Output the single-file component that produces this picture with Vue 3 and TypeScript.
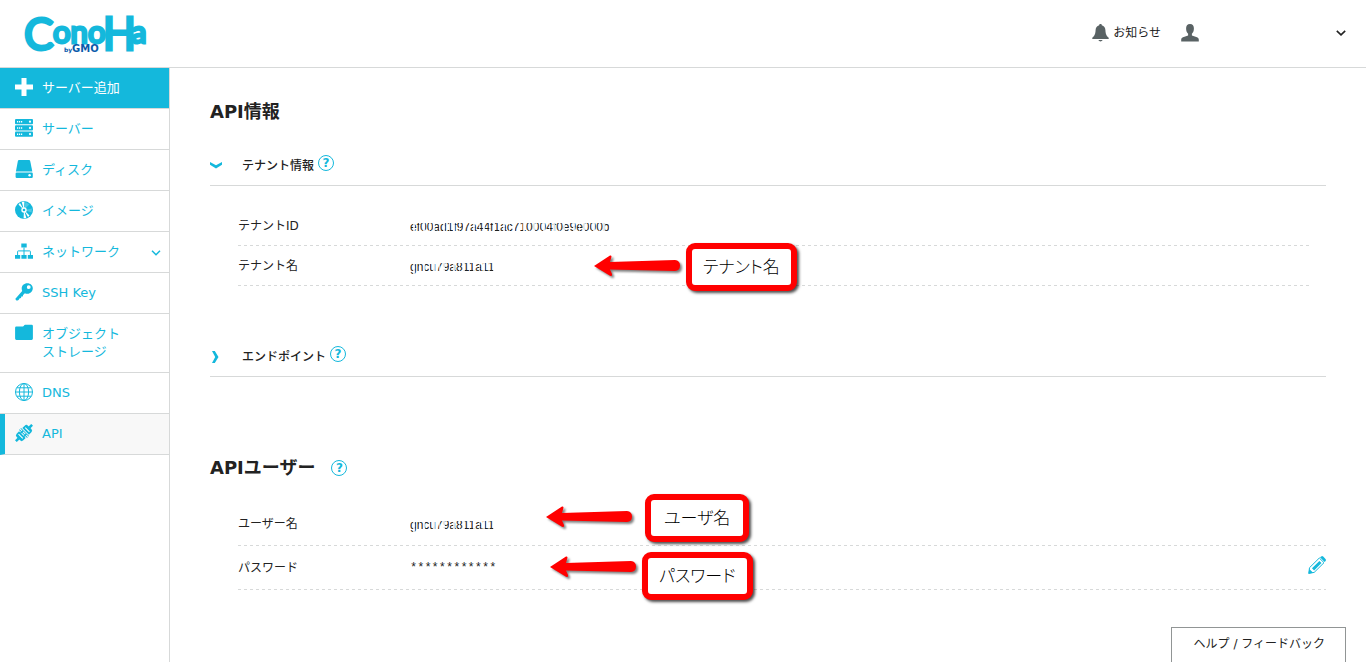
<script setup lang="ts">
import { ref } from 'vue'

interface NavItem {
  icon: string
  lines: string[]
  primary?: boolean
  active?: boolean
  expandable?: boolean
}

const navItems: NavItem[] = [
  { icon: 'plus', lines: ['サーバー追加'], primary: true },
  { icon: 'server', lines: ['サーバー'] },
  { icon: 'disk', lines: ['ディスク'] },
  { icon: 'image', lines: ['イメージ'] },
  { icon: 'network', lines: ['ネットワーク'], expandable: true },
  { icon: 'key', lines: ['SSH Key'] },
  { icon: 'folder', lines: ['オブジェクト', 'ストレージ'] },
  { icon: 'globe', lines: ['DNS'] },
  { icon: 'plug', lines: ['API'], active: true },
]

const callouts = [
  { name: 'tenant', text: 'テナント名' },
  { name: 'user', text: 'ユーザ名' },
  { name: 'password', text: 'パスワード' },
]

const tenantOpen = ref(true)
const endpointOpen = ref(false)
</script>

<template>
  <div class="page">
    <header class="header">
      <a href="#" class="logo" aria-label="ConoHa by GMO">
        <svg width="126" height="42" viewBox="0 0 126 42">
          <text class="logo-word" x="0" y="38" font-size="44">C<tspan x="29" y="31" font-size="31">ono</tspan><tspan x="79" y="38" font-size="46" class="logo-h">H</tspan><tspan x="107" y="31" font-size="31">a</tspan></text>
          <text class="logo-gmo" x="40" y="40" font-size="6">by<tspan x="48" font-size="10">GMO</tspan></text>
        </svg>
      </a>
      <div class="tools">
        <a href="#" class="notice">
          <svg width="17" height="18" viewBox="0 0 17 18" fill="#596264">
            <path d="M8.500 0c-.9 0-1.300.5-1.300 1.200C4.900 1.800 3.800 3.600 3.600 6c-.2 4-.9 5.700-3.300 7.700V15h16.400v-1.300c-2.400-2-3.100-3.700-3.300-7.700-.2-2.400-1.300-4.200-3.600-4.800C9.800.5 9.400 0 8.500 0zM6.500 16c.3 1 1.100 1.400 2 1.400s1.700-.4 2-1.400z" />
          </svg>
          <span>お知らせ</span>
        </a>
        <button type="button" class="account" aria-label="アカウント">
          <svg width="18" height="18" viewBox="0 0 18 18" fill="#596264">
            <path d="M9 0C6.300 0 5 1.900 5.100 4.500c0 2.400.8 4.200 2 5.300v1.700L2 13.200C.7 13.700.2 14.500.2 15.700V17.500h17.600v-1.800c0-1.200-.5-2-1.800-2.500l-5.100-1.700V9.800c1.200-1.100 2-2.900 2-5.300C13 1.900 11.700 0 9 0z" />
          </svg>
          <svg width="10" height="6" viewBox="0 0 10 6" fill="none" stroke="#222" stroke-width="1.600">
            <path d="M.8.8 5 4.800 9.200.8" />
          </svg>
        </button>
      </div>
    </header>

    <div class="body">
      <nav class="sidebar">
        <a
          v-for="item in navItems"
          :key="item.icon"
          href="#"
          class="nav-item"
          :class="{ primary: item.primary, active: item.active }"
        >
          <svg class="nav-icon" width="18" height="18" viewBox="0 0 18 18" fill="currentColor">
            <path v-if="item.icon === 'plus'" d="M6.500 0h5v6.500H18v5h-6.500V18h-5v-6.500H0v-5h6.500z" />
            <template v-else-if="item.icon === 'server'">
              <rect y="0" width="18" height="5.300" rx="1" />
              <rect y="6.200" width="18" height="5.300" rx="1" />
              <rect y="12.400" width="18" height="5.300" rx="1" />
              <g fill="#fff">
                <path d="M2 2h1.200v1.600H2zM4 2h1.200v1.600H4zM6 2h1.200v1.600H6zM2 8.200h1.200v1.600H2zM4 8.200h1.200v1.600H4zM6 8.200h1.200v1.600H6zM2 14.400h1.200V16H2zM4 14.400h1.200V16H4zM6 14.400h1.200V16H6z" />
                <circle cx="15" cy="2.700" r="1.100" />
                <circle cx="15" cy="8.900" r="1.100" />
                <circle cx="15" cy="15.100" r="1.100" />
              </g>
            </template>
            <template v-else-if="item.icon === 'disk'">
              <path d="M4 0h10q1 0 1.200 1L17.300 11.600H.9L2.900 1Q3.100 0 4 0z" />
              <rect x=".6" y="12.600" width="17.200" height="5.400" rx="1.200" />
              <circle cx="14.600" cy="15.300" r="1.200" fill="#fff" />
            </template>
            <template v-else-if="item.icon === 'image'">
              <circle cx="9" cy="9" r="9" />
              <g fill="#fff">
                <path d="M3.500 3.500 5 2.100 9 9zM6.700 1 9.400.6 9 9zM14.500 14.500 13 15.900 9 9zM11.300 17 8.600 17.400 9 9z" />
                <path d="M10.500 1 14.400 3.300 9 9zM17 7.500l-.4 4L9 9z" opacity=".25" />
                <circle cx="9" cy="9" r="2.700" />
              </g>
              <circle cx="9" cy="9" r="1.300" />
            </template>
            <template v-else-if="item.icon === 'network'">
              <path d="M6.300 1.500h5.400v4H6.300zM0 13h5.200v3.800H0zM6.400 13h5.200v3.800H6.400zM12.800 13H18v3.800h-5.200z" />
              <path d="M9 5.500V13M2.600 13V9.500q0-.6.6-.6h11.600q.6 0 .6.600V13" fill="none" stroke="currentColor" />
            </template>
            <template v-else-if="item.icon === 'key'">
              <path fill-rule="evenodd" d="M12.300.2c3.200 0 5.500 2.200 5.500 5.100s-2.300 5.500-5.400 5.500c-1 0-1.800-.2-2.500-.6l-1.800 1.700-.3 1.500-1.500.2-.3 1.500-1.600.3-.8 1.600-1.800.8L.2 16 7.200 8C6.900 7.300 6.700 6.500 6.700 5.600 6.700 2.500 9 .2 12.300.2zM13.700 2.200a1.900 1.900 0 1 0 .1 3.800 1.900 1.900 0 0 0-.1-3.800z" />
            </template>
            <path v-else-if="item.icon === 'folder'" d="M1.300 2.600h6.500c.9 0 1.300-1.800 2.300-1.800h6.600q1.200 0 1.200 1.200v12.500q0 1.400-1.300 1.400H1.400Q.1 15.900.1 14.500V3.800q0-1.200 1.200-1.200z" />
            <g v-else-if="item.icon === 'globe'" fill="none" stroke="currentColor" stroke-width="1">
              <circle cx="9" cy="9" r="8.500" />
              <ellipse cx="9" cy="9" rx="4.600" ry="8.500" />
              <path d="M9 .5v17M.5 9h17M1.700 4.800h14.600M1.700 13.200h14.600" />
            </g>
            <template v-else>
              <g transform="rotate(-45 9 9)">
                <path d="M-2.500 7.700H1.500V10.300H-2.500zM16.500 7.700h4v2.600h-4z" />
                <path d="M1 6.600Q1 4.300 3.300 4.300H6.700V13.700H3.300Q1 13.700 1 11.400zM11.300 4.300h3.400q2.300 0 2.300 2.300v4.800q0 2.300-2.300 2.300h-3.400z" />
                <path d="M7.700 3.300h.9v11.400h-.9zM9.600 3.300h.9v11.400h-.9zM6 6h4v1.400H6zM6 10.600h4V12H6z" />
                <path d="M3.800 6h1v6h-1zM13.200 6h1v6h-1z" fill="#fff" />
              </g>
            </template>
          </svg>
          <span class="nav-label"><span v-for="line in item.lines" :key="line">{{ line }}</span></span>
          <svg v-if="item.expandable" class="nav-arrow" width="10" height="6" viewBox="0 0 10 6" fill="none" stroke="currentColor" stroke-width="1.500">
            <path d="M1 .8 5 4.800 9 .8" />
          </svg>
        </a>
      </nav>

      <main class="content">
        <h1>API情報</h1>

        <section>
          <div class="bar">
            <button type="button" class="toggle" :aria-expanded="tenantOpen" @click="tenantOpen = !tenantOpen">
              <svg width="12" height="12" viewBox="0 0 12 12" fill="#14b8dc" :class="{ closed: !tenantOpen }">
                <path d="M0 2 6 5.200 12 2V4.800L6 8.500 0 4.800z" />
              </svg>
              <span>テナント情報</span>
            </button>
            <button type="button" class="help" aria-label="テナント情報のヘルプ">?</button>
          </div>
          <dl v-if="tenantOpen" class="rows tenant-rows">
            <div>
              <dt>テナントID</dt>
              <dd><span class="masked">ef00ad1f97a44f1ac710004f0e9e000b</span></dd>
            </div>
            <div>
              <dt>テナント名</dt>
              <dd><span class="masked">gncu79a811a11</span></dd>
            </div>
          </dl>
        </section>

        <section class="endpoint">
          <div class="bar">
            <button type="button" class="toggle" :aria-expanded="endpointOpen" @click="endpointOpen = !endpointOpen">
              <svg width="12" height="12" viewBox="0 0 12 12" fill="#14b8dc" :class="{ closed: !endpointOpen }">
                <path d="M0 2 6 5.200 12 2V4.800L6 8.500 0 4.800z" />
              </svg>
              <span>エンドポイント</span>
            </button>
            <button type="button" class="help" aria-label="エンドポイントのヘルプ">?</button>
          </div>
        </section>

        <section class="api-user">
          <div class="title">
            <h2>APIユーザー</h2>
            <button type="button" class="help" aria-label="APIユーザーのヘルプ">?</button>
          </div>
          <dl class="rows user-rows">
            <div>
              <dt>ユーザー名</dt>
              <dd><span class="masked">gncu79a811a11</span></dd>
            </div>
            <div>
              <dt>パスワード</dt>
              <dd class="secret">************</dd>
              <dd class="action">
                <button type="button" class="edit" aria-label="パスワードを編集">
                  <svg width="18" height="18" viewBox="0 0 18 18">
                    <path d="M1.500 11.700 11.300 2l4.700 4.700-9.800 9.700-5.400 1z" fill="#fff" stroke="#14b8dc" />
                    <path d="M12 1.300 13.200.4q1-.7 2 .2l2.300 2.300q.8 1 .1 2L16.600 6zM.4 17.700l.9-4.700 3.800 3.800zM4 12.300l7.400-7.400 2.100 2.100L6.100 14.400z" fill="#14b8dc" />
                  </svg>
                </button>
              </dd>
            </div>
          </dl>
        </section>

        <div v-for="c in callouts" :key="c.name" class="callout" :class="'callout-' + c.name">
          <svg width="90" height="26" viewBox="0 0 90 26" fill="#f00">
            <path d="M1 12 17 1.500Q19 1 18.300 3.500L17 8 82 6Q87 6.500 87 11.500T82 17L17 15.500 19 20Q19.500 22.500 17 21.800z" />
          </svg>
          <span>{{ c.text }}</span>
        </div>
      </main>
    </div>

    <button type="button" class="feedback">ヘルプ / フィードバック</button>
  </div>
</template>

<style>
body {
  margin: 0;
  background: #fff;
}
</style>

<style scoped>
.page {
  display: flex;
  flex-direction: column;
  min-height: 100vh;
  color: #222;
  font-family: "DejaVu Sans", "Noto Sans CJK JP", sans-serif;
  font-size: 12px;
  font-weight: 400;
  line-height: 18px;
}

button {
  padding: 0;
  border: 0;
  background: none;
  color: inherit;
  font: inherit;
  cursor: pointer;
}

a {
  color: inherit;
  text-decoration: none;
}

svg {
  display: block;
  flex: none;
}

.header {
  display: flex;
  justify-content: space-between;
  align-items: center;
  box-sizing: border-box;
  height: 68px;
  padding: 0 20px 2px 24px;
  border-bottom: 1px solid #d7d9d9;
}

.logo svg {
  overflow: visible;
}

.logo-word {
  fill: #14b8dc;
  stroke: #14b8dc;
  stroke-width: 3px;
  font-family: Lato, sans-serif;
  font-weight: 400;
}

.logo-h {
  font-family: Roboto, sans-serif;
}

.logo-gmo {
  fill: #0a5aaa;
  font-family: "DejaVu Sans", sans-serif;
  font-weight: 700;
}

.tools,
.notice,
.account {
  display: flex;
  align-items: center;
}

.tools {
  gap: 20px;
}

.notice {
  gap: 4px;
}

.account {
  justify-content: space-between;
  width: 165px;
}

.body {
  display: flex;
  flex: 1;
}

.sidebar {
  flex: none;
  box-sizing: border-box;
  width: 170px;
  border-right: 1px solid #d7d9d9;
}

.nav-item {
  display: flex;
  align-items: flex-start;
  gap: 9px;
  padding: 10px 8px 11px 15px;
  border-bottom: 1px solid #d7d9d9;
  color: #14b8dc;
  font-size: 13px;
}

.nav-label {
  display: flex;
  flex: 1;
  flex-direction: column;
  padding-top: 1px;
}

.nav-arrow {
  align-self: center;
  margin-top: 3px;
}

.nav-item.primary {
  background: #14b8dc;
  color: #fff;
}

.nav-item.active {
  padding-left: 10px;
  border-left: 5px solid #14b8dc;
  background: #f8f8f8;
}

.content {
  position: relative;
  flex: 1;
  min-width: 0;
  padding: 30px 40px 72px;
}

h1,
h2 {
  margin: 0;
  font-size: 18px;
  font-weight: 700;
  line-height: 28px;
}

.bar {
  display: flex;
  align-items: center;
  gap: 4px;
  height: 40px;
  border-bottom: 1px solid #d7d9d9;
}

h1 + section {
  margin-top: 19px;
}

.toggle {
  display: flex;
  align-items: center;
  gap: 20px;
  padding-top: 2px;
  font-weight: 500;
}

.closed {
  transform: rotate(-90deg);
}

.help {
  box-sizing: border-box;
  width: 16px;
  height: 16px;
  border: 1px solid #14b8dc;
  border-radius: 50%;
  color: #14b8dc;
  font-size: 12px;
  font-weight: 700;
  line-height: 14px;
}

.bar .help {
  margin-bottom: 4px;
}

.rows {
  margin: 20px 0 0 28px;
}

.rows > div {
  display: flex;
  align-items: center;
  box-sizing: border-box;
  height: 40px;
  padding-bottom: 1px;
  background: repeating-linear-gradient(90deg, #d7d9d9 0 3px, transparent 3px 6px) bottom / 100% 1px no-repeat;
}

.tenant-rows {
  margin-right: 14px;
}

.user-rows > div {
  height: 44px;
}

dt {
  width: 172px;
}

dd {
  margin: 0;
}

.masked {
  position: relative;
  display: block;
  overflow: hidden;
  padding-top: 2px;
  font-family: "Liberation Sans", sans-serif;
  line-height: 14px;
}

.masked::after {
  position: absolute;
  inset: 0;
  background:
    linear-gradient(#fff 0 5px, transparent 5px),
    repeating-linear-gradient(90deg, transparent 0 3px, rgba(255, 255, 255, 0.8) 3px 5px, transparent 5px 9px, rgba(255, 255, 255, 0.6) 9px 10px);
  content: "";
}

.secret {
  font-family: "Liberation Mono", monospace;
}

.action {
  margin-left: auto;
}

.edit {
  display: block;
  padding-bottom: 5px;
}

.endpoint {
  margin-top: 50px;
}

.api-user {
  margin-top: 77px;
}

.title {
  display: flex;
  align-items: center;
  gap: 16px;
}

.callout {
  position: absolute;
  display: flex;
  align-items: flex-start;
  gap: 3px;
  color: #000;
  font-family: "Noto Sans CJK JP", sans-serif;
  font-size: 17px;
  font-weight: 300;
  font-feature-settings: "palt";
  line-height: 24px;
}

.callout svg {
  margin-top: 11px;
  filter: drop-shadow(2px 2px 1px rgba(0, 0, 0, 0.5));
}

.callout span {
  padding: 5px 11px 7px;
  border: 6px solid #f00;
  border-radius: 9px;
  background: #fff;
  box-shadow: 2px 2px 3px rgba(0, 0, 0, 0.7);
}

.callout-tenant {
  top: 175px;
  left: 423px;
}

.callout-user {
  gap: 10px;
  top: 426px;
  left: 375px;
}

.callout-user span {
  padding-inline: 13px;
}

.callout-password {
  top: 484px;
  left: 379px;
}

.callout-password svg {
  margin-top: 3px;
}

.feedback {
  position: fixed;
  right: 20px;
  bottom: 0;
  padding: 7px 20px 9px 22px;
  border: 1px solid #919595;
  border-bottom: 0;
  background: #fff;
}
</style>
